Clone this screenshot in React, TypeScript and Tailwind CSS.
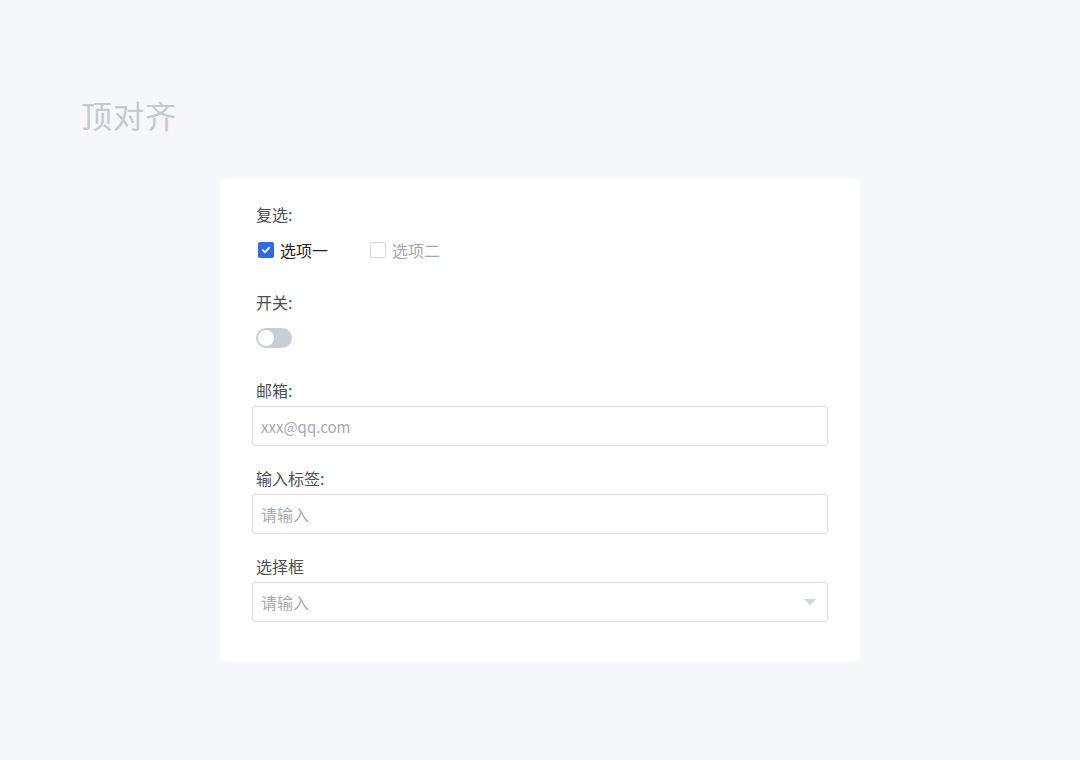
import { useState } from "react";

const FONT = { fontFamily: '"Noto Sans CJK SC", "Noto Sans", sans-serif' };

function Label({ children }: { children: React.ReactNode }) {
  return <div className="pl-1 h-6 leading-6 text-[16px] text-[#4b4f56]">{children}</div>;
}

function Check({ checked, label, onClick }: { checked: boolean; label: string; onClick: () => void }) {
  return (
    <button onClick={onClick} className="flex items-center gap-[6px] h-6">
      {checked ? (
        <span className="w-4 h-4 rounded-[2px] bg-[#2b6be6] flex items-center justify-center">
          <svg width="10" height="10" viewBox="0 0 10 10" fill="none">
            <path d="M1.8 5.2 4 7.3 8.3 2.7" stroke="white" strokeWidth="1.8" strokeLinecap="round" strokeLinejoin="round" />
          </svg>
        </span>
      ) : (
        <span className="w-4 h-4 rounded-[2px] border border-[#d4d7dc] bg-white" />
      )}
      <span className={checked ? "text-[16px] text-[#1d2129]" : "text-[16px] text-[#a3a7ae]"}>{label}</span>
    </button>
  );
}

export default function App() {
  const [opts, setOpts] = useState([true, false]);
  const [on, setOn] = useState(false);

  return (
    <div className="min-h-[760px] w-[1080px] bg-[#f5f7fa]" style={FONT}>
      <div className="pt-[93px] pl-[81px] h-[178px]">
        <h1 className="text-[31px] leading-[44px] text-[#c6c9ce] tracking-[1px]">顶对齐</h1>
      </div>

      <div className="ml-[220px] w-[640px] bg-white rounded-lg px-8 pt-6 pb-10">
        {/* 复选 */}
        <div className="h-[88px]">
          <Label>复选:</Label>
          <div className="mt-3 pl-[6px] flex items-center gap-[42px]">
            <Check checked={opts[0]} label="选项一" onClick={() => setOpts([!opts[0], opts[1]])} />
            <Check checked={opts[1]} label="选项二" onClick={() => setOpts([opts[0], !opts[1]])} />
          </div>
        </div>

        {/* 开关 */}
        <div className="h-[88px]">
          <Label>开关:</Label>
          <div className="mt-[14px] pl-1">
            <button
              onClick={() => setOn(!on)}
              className={`w-9 h-5 rounded-full p-[2px] flex ${on ? "bg-[#2b6be6] justify-end" : "bg-[#c9cdd4] justify-start"}`}
            >
              <span className="w-4 h-4 rounded-full bg-white" />
            </button>
          </div>
        </div>

        {/* 邮箱 */}
        <div className="h-[88px]">
          <Label>邮箱:</Label>
          <input
            placeholder="xxx@qq.com"
            className="mt-1 w-full h-10 px-2 rounded-[3px] border border-[#dcdfe4] text-[15px] text-[#1d2129] placeholder:text-[#a6aab0] outline-none"
          />
        </div>

        {/* 输入标签 */}
        <div className="h-[88px]">
          <Label>输入标签:</Label>
          <input
            placeholder="请输入"
            className="mt-1 w-full h-10 px-2 rounded-[3px] border border-[#dcdfe4] text-[16px] text-[#1d2129] placeholder:text-[#a6aab0] outline-none"
          />
        </div>

        {/* 选择框 */}
        <div>
          <Label>选择框</Label>
          <div className="mt-1 w-full h-10 px-2 rounded-[3px] border border-[#dcdfe4] flex items-center justify-between">
            <span className="text-[16px] text-[#a6aab0]">请输入</span>
            <svg width="12" height="7" viewBox="0 0 12 7" className="mr-[3px] mt-[1px]">
              <path d="M0 0h12L6 6.5z" fill="#d3d6db" />
            </svg>
          </div>
        </div>
      </div>
    </div>
  );
}
